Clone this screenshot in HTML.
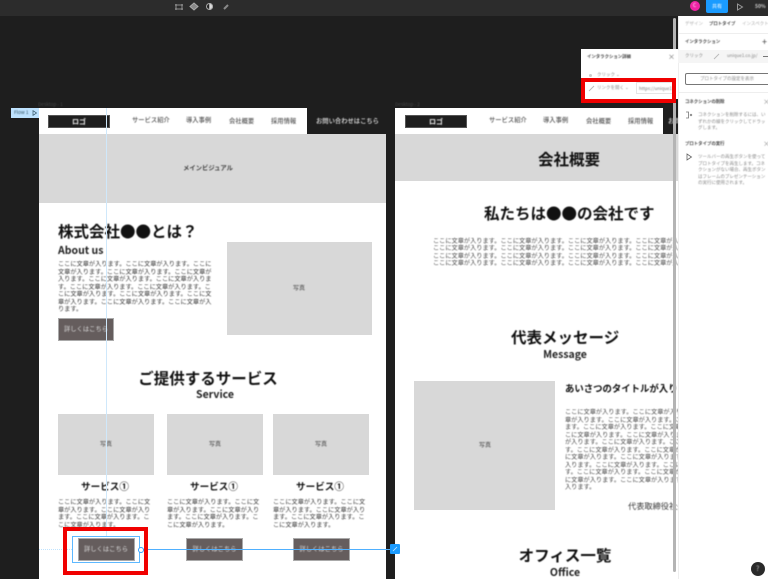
<!DOCTYPE html>
<html lang="ja"><head><meta charset="utf-8"><style>
html,body{margin:0;padding:0}
body{width:768px;height:579px;overflow:hidden;background:#1e1e1e;position:relative;font-family:"Noto Sans CJK JP","Liberation Sans",sans-serif;color:#111}
div,span{position:absolute}
.t{white-space:nowrap;filter:blur(.4px)}
.c{transform:translateX(-50%)}
.h{font-size:15.5px;font-weight:700;line-height:20px;color:#111}
.s{font-size:10.5px;font-weight:700;line-height:14px;color:#222}
.b{font-size:6.2px;line-height:7.5px;color:#333}
.n{font-size:6.3px;line-height:8px;color:#555;font-weight:500}
.g{background:#d8d8d8}
.w{background:#fff}
.btn{background:#655d5d;border:.5px solid #aaa;box-sizing:border-box}
.bt{font-size:6.3px;line-height:8px;color:#ddd}
.p{font-size:4.5px;line-height:6.6px;color:#888}
.ph{font-size:6px;line-height:8px;color:#444}
.pb{font-size:4.4px;font-weight:700;color:#444;line-height:7px}
</style></head><body>
<div style="left:0;top:0;width:768px;height:16px;background:#2c2c2c"></div>
<svg style="position:absolute;left:170px;top:0" width="70" height="14" fill="none" stroke="#aaa">
<path d="M6 5h6v4h-6zM6 4v6M12 4v6M5 5h8M5 9h8" stroke-width=".8"/><path d="M20 6.500l4-3.500 4 3.500-4 3.500z" fill="#888"/><circle cx="39.500" cy="6.500" r="3" fill="#222"/><path d="M39.500 3.500a3 3 0 0 1 0 6z" fill="#ddd"/><path d="M54 9l4-4" stroke-width="2" stroke="#888"/></svg>
<div style="left:690px;top:1px;width:10px;height:10px;border-radius:50%;background:#f024a5"></div>
<div class="t" style="left:693px;top:3px;font-size:5px;line-height:6px;color:#fff">C</div>
<div style="left:706px;top:0;width:22px;height:13px;background:#1a9bff;border-radius:0 0 2px 2px"></div>
<div class="t" style="left:712px;top:3px;font-size:5px;color:#fff;line-height:7px">共有</div>
<svg style="position:absolute;left:736px;top:3px" width="8" height="8" fill="none" stroke="#999"><path d="M1.500 1l5 3-5 3z"/></svg>
<div class="t" style="left:755px;top:3px;font-size:5px;line-height:7px;color:#ccc;font-weight:700">50%</div>

<div class="t" style="left:38px;top:101px;font-size:4.800px;line-height:7px;color:#444">Desktop - 1</div>
<div class="t" style="left:395px;top:101px;font-size:4.800px;line-height:7px;color:#444">Desktop - 2</div>
<div style="left:11px;top:108px;width:28px;height:10px;background:#bfe3ff"></div>
<div class="t" style="left:14px;top:110px;font-size:4.800px;line-height:6px;color:#356">Flow 1</div>
<svg style="position:absolute;left:32px;top:110px" width="6" height="6" fill="none" stroke="#356" stroke-width=".7"><path d="M1 .7l3.500 2.300-3.500 2.300z"/></svg>

<!-- frame 1 -->
<div class="w" style="left:39px;top:108px;width:347px;height:471px"></div>
<div style="left:307px;top:108px;width:79px;height:26px;background:#1e1e1e"></div>
<div class="g" style="left:39px;top:134px;width:347px;height:69px"></div>
<div style="left:48px;top:115px;width:62px;height:13px;background:#1e1e1e;border:.5px solid #555;box-sizing:border-box"></div>
<div class="t c" style="left:79px;top:118px;font-size:7px;line-height:8px;color:#eee;font-weight:700">ロゴ</div>
<div class="t n" style="left:132px;top:116px">サービス紹介</div>
<div class="t n" style="left:186px;top:116px">導入事例</div>
<div class="t n" style="left:229px;top:117px">会社概要</div>
<div class="t n" style="left:271px;top:117px">採用情報</div>
<div class="t n" style="left:316px;top:117px;color:#e4e4e4">お問い合わせはこちら</div>
<div class="t n c" style="left:208px;top:164px;color:#444;font-weight:700">メインビジュアル</div>

<div class="t h" style="left:58px;top:221px">株式会社●●とは？</div>
<div class="t s" style="left:58px;top:244px">About us</div>
<div class="t b" style="left:58px;top:260px">ここに文章が入ります。ここに文章が入ります。ここに<br>文章が入ります。ここに文章が入ります。ここに文章が<br>入ります。ここに文章が入ります。ここに文章が入りま<br>す。ここに文章が入ります。ここに文章が入ります。こ<br>こに文章が入ります。ここに文章が入ります。ここに文<br>章が入ります。ここに文章が入ります。ここに文章が入<br>ります。</div>
<div class="btn" style="left:58px;top:318px;width:56px;height:23px"></div>
<div class="t c bt" style="left:86px;top:325px">詳しくはこちら</div>
<div class="g" style="left:226.500px;top:242px;width:145.500px;height:93px"></div>
<div class="t ph c" style="left:299px;top:284px">写真</div>

<div class="t h c" style="left:208px;top:368px">ご提供するサービス</div>
<div class="t s c" style="left:215px;top:388px">Service</div>

<div class="g" style="left:58px;top:414px;width:96px;height:61px"></div>
<div class="g" style="left:167px;top:414px;width:96px;height:61px"></div>
<div class="g" style="left:273px;top:414px;width:96px;height:61px"></div>
<div class="t ph c" style="left:106px;top:440px">写真</div>
<div class="t ph c" style="left:215px;top:440px">写真</div>
<div class="t ph c" style="left:321px;top:440px">写真</div>
<div class="t s c" style="left:105px;top:479px;font-size:9.600px;color:#111">サービス①</div>
<div class="t s c" style="left:214px;top:479px;font-size:9.600px;color:#111">サービス①</div>
<div class="t s c" style="left:320px;top:479px;font-size:9.600px;color:#111">サービス①</div>
<div class="t b" style="left:58px;top:498px">ここに文章が入ります。ここに文<br>章が入ります。ここに文章が入り<br>ます。ここに文章が入ります。こ<br>こに文章が入ります。</div>
<div class="t b" style="left:167px;top:498px">ここに文章が入ります。ここに文<br>章が入ります。ここに文章が入り<br>ます。ここに文章が入ります。こ<br>こに文章が入ります。</div>
<div class="t b" style="left:273px;top:498px">ここに文章が入ります。ここに文<br>章が入ります。ここに文章が入り<br>ます。ここに文章が入ります。こ<br>こに文章が入ります。</div>
<div class="btn" style="left:77.500px;top:538px;width:57px;height:23px"></div>
<div class="btn" style="left:186px;top:538px;width:57px;height:23px"></div>
<div class="btn" style="left:293px;top:538px;width:57px;height:23px"></div>
<div class="t c bt" style="left:106px;top:545px">詳しくはこちら</div>
<div class="t c bt" style="left:214.500px;top:545px">詳しくはこちら</div>
<div class="t c bt" style="left:321.500px;top:545px">詳しくはこちら</div>

<!-- frame 2 -->
<div style="left:395px;top:0;width:283px;height:579px;overflow:hidden">
<div class="w" style="left:0;top:108px;width:283px;height:471px"></div>
<div style="left:268px;top:108px;width:15px;height:26px;background:#1e1e1e"></div>
<div class="g" style="left:0;top:134px;width:283px;height:47px"></div>
<div style="left:10px;top:115px;width:62px;height:13px;background:#1e1e1e;border:.5px solid #555;box-sizing:border-box"></div>
<div class="t c" style="left:41px;top:118px;font-size:7px;line-height:8px;color:#eee;font-weight:700">ロゴ</div>
<div class="t n" style="left:94px;top:116px">サービス紹介</div>
<div class="t n" style="left:148px;top:116px">導入事例</div>
<div class="t n" style="left:191px;top:117px">会社概要</div>
<div class="t n" style="left:233px;top:117px">採用情報</div>
<div class="t n" style="left:273px;top:117px;color:#ddd">お問</div>
<div class="t h c" style="left:174px;top:149px">会社概要</div>
<div class="t h" style="left:89px;top:203px">私たちは●●の会社です</div>
<div class="t b" style="left:38px;top:236.500px;color:#444">ここに文章が入ります。ここに文章が入ります。ここに文章が入ります。ここに文章が入ります。ここに文章が入ります。<br>ここに文章が入ります。ここに文章が入ります。ここに文章が入ります。ここに文章が入ります。ここに文章が入ります。<br>ここに文章が入ります。ここに文章が入ります。ここに文章が入ります。ここに文章が入ります。ここに文章が入ります。<br>ここに文章が入ります。ここに文章が入ります。ここに文章が入ります。ここに文章が入ります。ここに文章が入ります。</div>
<div class="t h" style="left:116px;top:327px">代表メッセージ</div>
<div class="t s c" style="left:170px;top:348px">Message</div>
<div class="g" style="left:19px;top:381px;width:141px;height:129px"></div>
<div class="t ph c" style="left:90px;top:441px">写真</div>
<div class="t s" style="left:170px;top:381px;font-size:9.400px;color:#111">あいさつのタイトルが入ります</div>
<div class="t b" style="left:170px;top:408px;color:#444">ここに文章が入ります。ここに文章が入ります。ここに文<br>章が入ります。ここに文章が入ります。ここに文章が入り<br>ます。ここに文章が入ります。ここに文章が入ります。こ<br>こに文章が入ります。ここに文章が入ります。ここに文章<br>が入ります。ここに文章が入ります。ここに文章が入りま<br>す。ここに文章が入ります。ここに文章が入ります。ここ<br>に文章が入ります。ここに文章が入ります。ここに文章が<br>入ります。ここに文章が入ります。ここに文章が入ります<br>す。ここに文章が入ります。ここに文章が入ります。ここ<br>に文章が入ります。ここに文章が入ります。ここに文章が<br>入ります。</div>
<div class="t" style="left:233px;top:501px;font-size:8.200px;line-height:10px;color:#333">代表取締役社長</div>
<div class="t h c" style="left:170px;top:545px">オフィス一覧</div>
<div class="t s c" style="left:170px;top:566px">Office</div>
</div>
<div style="left:673px;top:18px;width:3px;height:554px;background:#b4b4b4;border-radius:2px"></div>

<!-- guides & connection -->
<div style="left:105.500px;top:108px;width:1px;height:428px;background:#cfe8fb"></div>
<div style="left:39px;top:549px;width:33px;border-top:1px dotted #bfe3ff"></div>
<div style="left:72px;top:536px;width:68px;height:27px;border:1px solid #5db8ff;box-sizing:border-box"></div>
<div style="left:140px;top:549px;width:252px;height:1px;background:#4fb0ff"></div>
<div style="left:137.500px;top:546.500px;width:6px;height:6px;border-radius:50%;background:#fff;border:1px solid #2f9fff;box-sizing:border-box"></div>
<div style="left:390px;top:544px;width:10px;height:10px;background:#1a9bff;border-radius:1px"></div>
<svg style="position:absolute;left:392px;top:546px" width="6" height="6" fill="none" stroke="#cfe8ff" stroke-width=".8"><path d="M1 5l4-4"/></svg>
<div style="left:63px;top:527px;width:85px;height:48px;border:4px solid #f00000;box-sizing:border-box"></div>

<!-- right panel -->
<div class="w" style="left:678px;top:16px;width:90px;height:563px"></div>
<div style="left:678px;top:16px;width:1px;height:563px;background:#eee"></div>
<div class="t p" style="left:685px;top:21px;color:#aaa">デザイン</div>
<div class="t pb" style="left:709px;top:21px;color:#444">プロトタイプ</div>
<div class="t p" style="left:742px;top:21px;color:#aaa">インスペクト</div>
<div style="left:678px;top:33px;width:90px;height:1px;background:#eee"></div>
<div class="t pb" style="left:685px;top:39px">インタラクション</div>
<div class="t" style="left:762px;top:37px;font-size:9px;line-height:10px;color:#444">+</div>
<div style="left:678px;top:50px;width:90px;height:13px;background:#f5f5f5"></div>
<div class="t p" style="left:685px;top:53px">クリック</div>
<svg style="position:absolute;left:713px;top:53px" width="7" height="7" fill="none" stroke="#bbb"><path d="M1 6l5-5"/></svg>
<div class="t p" style="left:727px;top:53px">unique1.co.jp/</div>
<div style="left:763px;top:56px;width:5px;height:1px;background:#777"></div>
<div style="left:685px;top:73px;width:90px;height:12px;border:.8px solid #777;border-radius:2px;box-sizing:border-box"></div>
<div class="t p" style="left:700px;top:76px">プロトタイプの設定を表示</div>
<div style="left:678px;top:92px;width:90px;height:1px;background:#eee"></div>
<div class="t pb" style="left:685px;top:99px">コネクションの削除</div>
<div class="t" style="left:763px;top:98px;font-size:7px;line-height:9px;color:#999">×</div>
<svg style="position:absolute;left:685px;top:111px" width="8" height="8" fill="none" stroke="#777" stroke-width=".8"><path d="M1 1h2.500v6h-2.500M5 3l2 2M7 3l-2 2"/></svg>
<div class="t p" style="left:698px;top:112px">コネクションを削除するには、い<br>ずれかの線をクリックしてドラッ<br>グします。</div>
<div class="t pb" style="left:685px;top:141px">プロトタイプの実行</div>
<div class="t" style="left:763px;top:140px;font-size:7px;line-height:9px;color:#999">×</div>
<svg style="position:absolute;left:686px;top:153px" width="7" height="8" fill="none" stroke="#666" stroke-width=".8"><path d="M1 1l4.500 3-4.500 3z"/></svg>
<div class="t p" style="left:698px;top:154px">ツールバーの再生ボタンを使って<br>プロトタイプを再生します。コネ<br>クションがない場合、再生ボタン<br>はフレームのプレゼンテーション<br>の実行に使用されます。</div>

<!-- popup -->
<div class="w" style="left:581px;top:49px;width:97px;height:50px"></div>
<div class="t pb" style="left:587px;top:53.500px">インタラクション詳細</div>
<div class="t" style="left:668px;top:53px;font-size:7px;line-height:9px;color:#777">×</div>
<div class="t p" style="left:597px;top:72px">クリック ⌄</div>
<div style="left:589px;top:74px;width:3px;height:3px;background:#ccc;border-radius:50%"></div>
<svg style="position:absolute;left:588px;top:85px" width="7" height="7" fill="none" stroke="#bbb"><path d="M1 6l5-5"/></svg>
<div class="t p" style="left:597px;top:85px">リンクを開く ⌄</div>
<div style="left:636px;top:82px;width:38px;height:12px;border:.5px solid #e5e5e5;box-sizing:border-box;overflow:hidden"><span class="t p" style="left:2px;top:2.500px;color:#777">https://unique1</span></div>
<div style="left:581px;top:78px;width:95px;height:25px;border:4px solid #f00000;box-sizing:border-box"></div>

<div style="left:751px;top:562px;width:14px;height:14px;border-radius:50%;background:#2a2a2a"></div>
<div class="t" style="left:756px;top:565px;font-size:7px;line-height:8px;color:#bbb">?</div>
</body></html>
